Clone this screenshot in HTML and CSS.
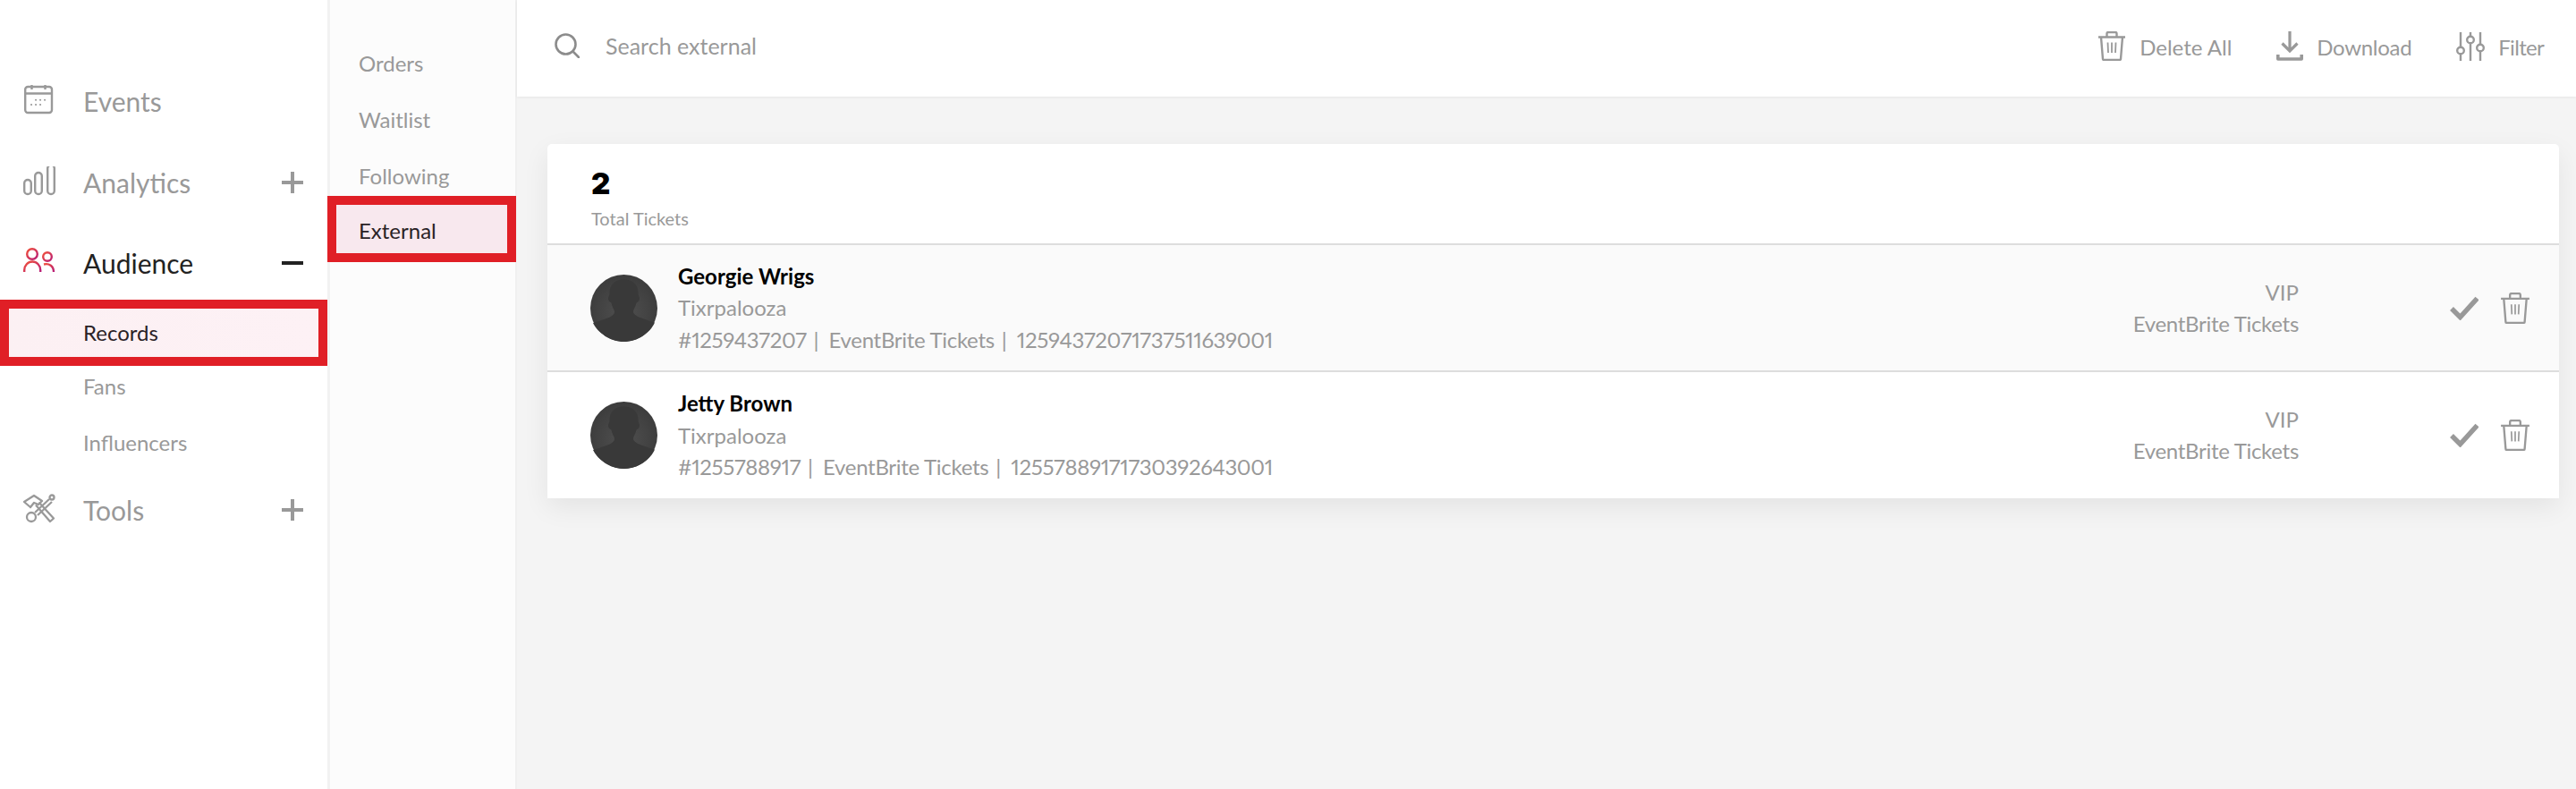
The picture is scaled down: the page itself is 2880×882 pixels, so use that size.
FILE: index.html
```html
<!DOCTYPE html>
<html lang="en">
<head>
<meta charset="utf-8">
<title>External</title>
<link rel="stylesheet" href="styles.css">
</head>
<body>
<div class="app">
  <nav class="side">
    <a class="side-item">
      <svg class="side-icon" viewBox="0 2 36 36" fill="none" stroke="#999" stroke-width="2.400"><rect x="2.200" y="4" width="29.800" height="29" rx="3"/><path d="M2.200 11.500h29.800M9.500 1v6M24.500 1v6"/><path d="M14 18.700h.1M19 18.700h.1M24 18.700h.1M9 24h.1M14 24h.1M19 24h.1" stroke-linecap="round" stroke-width="2"/></svg>
      <span>Events</span>
    </a>
    <a class="side-item">
      <svg class="side-icon" viewBox="0 3 36 36" fill="none" stroke="#999" stroke-width="2.400"><rect x="1.200" y="18" width="7.600" height="16" rx="3.800"/><rect x="13.200" y="10" width="7.600" height="24" rx="3.800"/><rect x="27.200" y="1.500" width="7.600" height="32.500" rx="3.800"/></svg>
      <span>Analytics</span>
      <svg class="toggle" viewBox="0 0 24 24" stroke="#999" stroke-width="4"><path d="M0 12h24M12 0v24"/></svg>
    </a>
    <a class="side-item current">
      <svg class="side-icon" viewBox="0 0 36 36" fill="none" stroke-width="2.400"><defs><linearGradient id="aud" x1="0" y1="0" x2="1" y2="1"><stop offset="0" stop-color="#f0503a"/><stop offset="1" stop-color="#b81e78"/></linearGradient></defs><g stroke="url(#aud)"><circle cx="10" cy="8" r="5.800"/><path d="M1.200 28v-2a9 9.500 0 0 1 18 0v2"/><circle cx="27" cy="11" r="4.800"/><path d="M23 19.500c6-1.500 11 2 11 8.500"/></g></svg>
      <span>Audience</span>
      <svg class="toggle" viewBox="0 0 24 24" stroke="#222" stroke-width="4"><path d="M0 12h24"/></svg>
    </a>
    <div class="sub">
      <a class="sub-item marked">Records</a>
      <a class="sub-item">Fans</a>
      <a class="sub-item">Influencers</a>
    </div>
    <a class="side-item">
      <svg class="side-icon" viewBox="0 0 36 36" fill="none" stroke="#999" stroke-width="2.300" stroke-linejoin="round"><path d="M1 9 12 2l9 6-4 4-5-2-4 5z"/><path d="M14 12.500 30 31l4-3.500L17.500 9.500"/><path d="M29 6 13 21M32 9 16 24"/><circle cx="32" cy="4" r="2.500"/><circle cx="9" cy="26" r="5"/></svg>
      <span>Tools</span>
      <svg class="toggle" viewBox="0 0 24 24" stroke="#999" stroke-width="4"><path d="M0 12h24M12 0v24"/></svg>
    </a>
  </nav>

  <nav class="tabs">
    <a class="tab">Orders</a>
    <a class="tab">Waitlist</a>
    <a class="tab">Following</a>
    <a class="tab marked-tab">External</a>
  </nav>

  <main class="main">
    <header class="topbar">
      <svg class="search-icon" viewBox="0 0 28 28" fill="none" stroke="#8c8c8c" stroke-width="2.600"><circle cx="12.500" cy="12.500" r="11"/><path d="m20.500 20.500 6.500 6.500" stroke-linecap="round"/></svg>
      <span class="search-text">Search external</span>
      <div class="actions">
        <a class="action">
          <svg class="trash-lg" viewBox="0 0 30 33" fill="none" stroke="#999" stroke-width="2.400" stroke-linejoin="round"><path d="M0 6.500h30M9.500 6V2.500q0-1.500 1.500-1.500h8q1.500 0 1.500 1.500V6M3 6.500 5 31q0 1 1.500 1h17q1.500 0 1.500-1l2-24.500"/><path d="M10.500 12.500 11 24M15 12.500V24M19.500 12.500 19 24" stroke-width="1.800"/></svg>
          <span>Delete All</span>
        </a>
        <a class="action">
          <svg class="download" viewBox="0 0 30 33" fill="none" stroke="#999" stroke-width="3.200"><path d="M15 0v22M6.500 13.500 15 22l8.500-8.500"/><path d="M1.800 26v5h26.400v-5" stroke-width="3.600" stroke-linejoin="round"/></svg>
          <span class="wide">Download</span>
        </a>
        <a class="action">
          <svg class="filter" viewBox="0 0 32 33" fill="none" stroke="#999" stroke-width="2.400"><path d="M5 1v16M5 26v7M16 1v4M16 14v19M27 1v13M27 23v10"/><circle cx="5" cy="21.500" r="3.800"/><circle cx="16" cy="9.500" r="3.800"/><circle cx="27" cy="18.500" r="3.800"/></svg>
          <span class="tight">Filter</span>
        </a>
      </div>
    </header>

    <section class="card">
      <div class="card-head">
        <strong class="count">2</strong>
        <span class="count-label">Total Tickets</span>
      </div>

      <article class="row shaded">
        <svg class="avatar" viewBox="0 0 75 75"><defs><radialGradient id="av1" cx=".5" cy=".55" r=".55"><stop offset="0" stop-color="#505050"/><stop offset="1" stop-color="#3c3c3c"/></radialGradient></defs><circle cx="37.500" cy="37.500" r="37.500" fill="url(#av1)"/><path d="M37.500 5.500c10 0 16 6 16 15 0 3 1.500 4 1.500 6.500s-2 3.500-3.500 4.500c-1 5-3.500 7-3.500 10 0 4 7 7 24 12-5 12-20 21.500-34.500 21.500S8 65 3 54c17-5 24-8 24-12 0-3-2.500-5-3.500-10.500-1.500-1-3.500-2-3.500-4.500s1.500-3.500 1.500-6.500c0-9 6-15 16-15z" fill="#393939"/></svg>
        <div class="info">
          <div class="name">Georgie Wrigs</div>
          <div class="line">Tixrpalooza</div>
          <div class="line"><span class="num">#1259437207</span><span class="sep">|</span><span class="source">EventBrite Tickets</span><span class="sep">|</span><span class="num">12594372071737511639001</span></div>
        </div>
        <div class="kind">
          <div>VIP</div>
          <div class="source">EventBrite Tickets</div>
        </div>
        <svg class="check" viewBox="0 0 32 27" fill="none" stroke="#999" stroke-width="5.500"><path d="M2 14l9.500 9.500L30.500 2.500"/></svg>
        <svg class="trash" viewBox="0 0 30 33" fill="none" stroke="#999" stroke-width="2.200" stroke-linejoin="round"><path d="M0 6.500h30M9.500 6V2.500q0-1.500 1.500-1.500h8q1.500 0 1.500 1.500V6M3 6.500 5 31q0 1 1.500 1h17q1.500 0 1.500-1l2-24.500"/><path d="M11 12.500 11.500 23M15 12.500V23M19 12.500 18.500 23" stroke-width="1.600"/></svg>
      </article>

      <article class="row">
        <svg class="avatar" viewBox="0 0 75 75"><defs><radialGradient id="av2" cx=".5" cy=".55" r=".55"><stop offset="0" stop-color="#505050"/><stop offset="1" stop-color="#3c3c3c"/></radialGradient></defs><circle cx="37.500" cy="37.500" r="37.500" fill="url(#av2)"/><path d="M37.500 5.500c10 0 16 6 16 15 0 3 1.500 4 1.500 6.500s-2 3.500-3.500 4.500c-1 5-3.500 7-3.500 10 0 4 7 7 24 12-5 12-20 21.500-34.500 21.500S8 65 3 54c17-5 24-8 24-12 0-3-2.500-5-3.500-10.500-1.500-1-3.500-2-3.500-4.500s1.500-3.500 1.500-6.500c0-9 6-15 16-15z" fill="#393939"/></svg>
        <div class="info">
          <div class="name">Jetty Brown</div>
          <div class="line">Tixrpalooza</div>
          <div class="line"><span class="num">#1255788917</span><span class="sep">|</span><span class="source">EventBrite Tickets</span><span class="sep">|</span><span class="num">12557889171730392643001</span></div>
        </div>
        <div class="kind">
          <div>VIP</div>
          <div class="source">EventBrite Tickets</div>
        </div>
        <svg class="check" viewBox="0 0 32 27" fill="none" stroke="#999" stroke-width="5.500"><path d="M2 14l9.500 9.500L30.500 2.500"/></svg>
        <svg class="trash" viewBox="0 0 30 33" fill="none" stroke="#999" stroke-width="2.200" stroke-linejoin="round"><path d="M0 6.500h30M9.500 6V2.500q0-1.500 1.500-1.500h8q1.500 0 1.500 1.500V6M3 6.500 5 31q0 1 1.500 1h17q1.500 0 1.500-1l2-24.500"/><path d="M11 12.500 11.500 23M15 12.500V23M19 12.500 18.500 23" stroke-width="1.600"/></svg>
      </article>
    </section>
  </main>
</div>
</body>
</html>
```

FILE: styles.css
```css
* { box-sizing: border-box; }
html, body { margin: 0; height: 100%; }
body {
  font-family: "Lato", "Inter", sans-serif;
  color: #999;
  background: #fff;
  overflow: hidden;
}
.app { display: flex; height: 882px; }

/* primary sidebar */
.side {
  width: 369px;
  flex: none;
  padding-top: 78px;
  background: #fff;
  border-right: 3px solid #f2f2f2;
  display: flex;
  flex-direction: column;
}
.side-item {
  height: 70px;
  margin-bottom: 21px;
  padding: 0 27px 0 26px;
  display: flex;
  align-items: center;
  font-size: 30px;
}
.side-item.current { color: #222; margin-top: -1px; margin-bottom: 6px; }
.side-icon { width: 36px; height: 36px; flex: none; margin-right: 31px; }
.toggle { width: 24px; height: 24px; margin-left: auto; }
.sub { display: flex; flex-direction: column; gap: 15px; margin-bottom: 15px; }
.sub-item {
  height: 48px;
  padding: 0 0 3px 93px;
  display: flex;
  align-items: center;
  font-size: 24px;
}
.sub-item.marked {
  height: 74px;
  margin-bottom: -15px;
  padding: 0 0 2px 83px;
  color: #2a2226;
  border: 10px solid #e01f26;
  background: linear-gradient(90deg, #fcf0f3, #fdf1f5);
}

/* secondary sidebar */
.tabs {
  width: 209px;
  flex: none;
  padding-top: 50px;
  background: #fcfcfc;
  border-right: 2px solid #f0f0f0;
  display: flex;
  flex-direction: column;
  gap: 19px;
}
.tab {
  height: 44px;
  padding: 0 0 3px 32px;
  display: flex;
  align-items: center;
  font-size: 24px;
}
.tab.marked-tab {
  height: 74px;
  margin: -20px -1px 0 -3px;
  padding: 3px 0 0 25px;
  color: #2a2226;
  border: 10px solid #e01f26;
  background: #f8e8ee;
}

/* main */
.main { flex: 1; background: #f4f4f4; min-width: 0; }
.topbar {
  height: 108px;
  padding: 0 36px 6px 42px;
  background: #fff;
  box-shadow: 0 1px 3px rgba(0, 0, 0, .06);
  display: flex;
  align-items: center;
  font-size: 24px;
}
.search-icon { width: 28px; height: 28px; margin-right: 29px; }
.search-text { font-size: 25px; }
.actions { margin-left: auto; display: flex; align-items: center; gap: 50px; }
.action { display: flex; align-items: center; gap: 15px; }
.action span { padding-top: 2px; }
.action .wide { letter-spacing: -.3px; }
.action .tight { letter-spacing: -.7px; }
.trash-lg { width: 32px; height: 33px; }
.download { width: 30px; height: 33px; }
.filter { width: 32px; height: 33px; }

/* card */
.card {
  margin: 53px 19px 0 34px;
  border-radius: 5px 5px 0 0;
  background: #fff;
  box-shadow: 0 10px 30px rgba(0, 0, 0, .07);
}
.card-head {
  height: 113px;
  padding: 28px 0 0 49px;
  border-bottom: 2px solid #ddd;
  display: flex;
  flex-direction: column;
  align-items: flex-start;
}
.count { font: 900 33px/32px "Inter", sans-serif; color: #000; }
.count-label { margin-top: 11px; font-size: 20px; line-height: 24px; }
.row {
  height: 141px;
  padding: 0 32px 0 48px;
  display: flex;
  align-items: center;
}
.row.shaded { height: 142px; background: #fafafa; border-bottom: 2px solid #ddd; }
.avatar { width: 75px; height: 75px; flex: none; margin-right: 23px; }
.info { line-height: 35.500px; font-size: 24px; white-space: nowrap; }
.name { font-weight: 700; color: #000; font-size: 24px; }
.num { font-variant-numeric: proportional-nums; letter-spacing: -.35px; }
.source { letter-spacing: -.3px; }
.sep { margin: 0 11px 0 8px; }
.kind { margin-left: auto; text-align: right; font-size: 24px; line-height: 35px; }
.row:last-child .kind { padding-bottom: 2px; }
.check { width: 32px; height: 27px; flex: none; margin: 0 24px 0 169px; }
.trash { width: 34px; height: 35px; flex: none; }
```
